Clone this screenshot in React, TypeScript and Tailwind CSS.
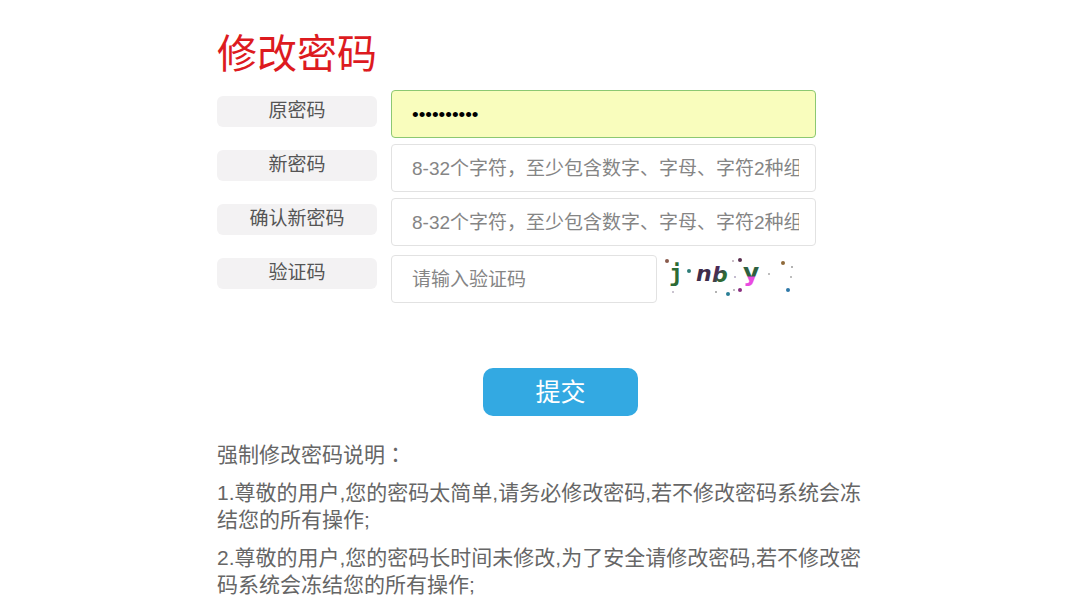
import { useState } from "react";
import type { FormEvent } from "react";

interface FieldProps {
  id: string;
  label: string;
  placeholder?: string;
  defaultValue?: string;
  filled?: boolean;
}

const PASSWORD_HINT = "8-32个字符，至少包含数字、字母、字符2种组合";

const NOTES = [
  "1.尊敬的用户,您的密码太简单,请务必修改密码,若不修改密码系统会冻结您的所有操作;",
  "2.尊敬的用户,您的密码长时间未修改,为了安全请修改密码,若不修改密码系统会冻结您的所有操作;",
];

const SPECKS = [
  { x: 2, y: 6, r: 2, color: "#8a5a4c" },
  { x: 24, y: 16, r: 2, color: "#2f7d78" },
  { x: 75, y: 5, r: 2, color: "#5a2f4f" },
  { x: 118, y: 8, r: 2, color: "#8f6a3a" },
  { x: 63, y: 39, r: 2, color: "#2a7f96" },
  { x: 75, y: 35, r: 2, color: "#8a2f80" },
  { x: 123, y: 35, r: 2, color: "#2f78a8" },
  { x: 68, y: 6, r: 1, color: "#b9a9b4" },
  { x: 70, y: 22, r: 1, color: "#b0a6c0" },
  { x: 104, y: 19, r: 1, color: "#a8a8a8" },
  { x: 127, y: 12, r: 1, color: "#9a9a9a" },
  { x: 126, y: 22, r: 1, color: "#a8a8a8" },
  { x: 8, y: 37, r: 1, color: "#b9b0c0" },
  { x: 51, y: 37, r: 1, color: "#9a9a9a" },
  { x: 69, y: 35, r: 1, color: "#a8a0a8" },
];

function Field({ id, label, placeholder, defaultValue, filled }: FieldProps) {
  return (
    <div className="flex items-start gap-[14px]">
      <FieldLabel id={id} label={label} />
      <input
        id={id}
        type="password"
        placeholder={placeholder}
        defaultValue={defaultValue}
        className={`h-12 w-[425px] min-w-0 rounded border pt-[2px] pr-4 pl-5 text-[19px] outline-none placeholder:text-[#858585] ${
          filled
            ? "border-[#8cc872] bg-[#f9fdbd] text-black"
            : "border-[#e2e2e2] bg-white text-[#555]"
        }`}
      />
    </div>
  );
}

function FieldLabel({ id, label }: { id: string; label: string }) {
  return (
    <label
      htmlFor={id}
      className="mt-[6px] h-[31px] w-40 shrink-0 rounded-md bg-[#f3f2f3] text-center text-[19px] leading-[30px] text-[#555]"
    >
      {label}
    </label>
  );
}

function Captcha() {
  return (
    <svg viewBox="0 0 130 42" className="h-[42px] w-[130px]" aria-label="验证码">
      <defs>
        <linearGradient id="captchaB" x1="0" y1="0" x2="1" y2="1">
          <stop offset="35%" stopColor="#4a2a55" />
          <stop offset="65%" stopColor="#2f6b35" />
        </linearGradient>
        <linearGradient
          id="captchaY"
          gradientUnits="userSpaceOnUse"
          x1="0"
          y1="12"
          x2="0"
          y2="32"
        >
          <stop offset="45%" stopColor="#2f6040" />
          <stop offset="50%" stopColor="#e94be0" />
        </linearGradient>
      </defs>
      <g fontFamily="'DejaVu Sans', sans-serif" fontWeight="bold">
        <text
          x="4"
          y="26"
          fontSize="23"
          fill="#2c6b35"
          fontFamily="'DejaVu Sans Mono', monospace"
        >
          j
        </text>
        <text x="31" y="26" fontSize="22" fontStyle="italic" fill="#3f2c4a">
          n
        </text>
        <text x="47" y="27" fontSize="22" fontStyle="italic" fill="url(#captchaB)">
          b
        </text>
        <text x="78" y="26" fontSize="25" fill="url(#captchaY)">
          y
        </text>
      </g>
      {SPECKS.map((s) => (
        <circle key={`${s.x}-${s.y}`} cx={s.x} cy={s.y} r={s.r} fill={s.color} />
      ))}
    </svg>
  );
}

function App() {
  const [submitted, setSubmitted] = useState(false);

  const handleSubmit = (e: FormEvent) => {
    e.preventDefault();
    setSubmitted(true);
  };

  return (
    <main className="mx-auto max-w-[664px] bg-white pt-[30px] pl-[9px] font-['Liberation_Sans','Noto_Sans_CJK_SC',sans-serif]">
      <h1 className="text-[40px] leading-[48px] text-[#dd1b1f]">修改密码</h1>
      <form onSubmit={handleSubmit} className="mt-3 flex flex-col gap-[6px]">
        <Field id="old" label="原密码" defaultValue="abcd123456" filled />
        <Field id="new" label="新密码" placeholder={PASSWORD_HINT} />
        <Field id="confirm" label="确认新密码" placeholder={PASSWORD_HINT} />
        <div className="flex items-start gap-[14px]">
          <FieldLabel id="code" label="验证码" />
          <div className="flex items-start gap-2 pt-[3px]">
            <input
              id="code"
              type="text"
              placeholder="请输入验证码"
              className="h-12 w-[266px] rounded border border-[#e2e2e2] bg-white px-5 pt-[2px] text-[19px] text-[#555] outline-none placeholder:text-[#858585]"
            />
            <Captcha />
          </div>
        </div>
        <button
          type="submit"
          disabled={submitted}
          className="mt-[59px] ml-[266px] h-12 w-[155px] rounded-[10px] bg-[#33a9e2] text-[25px] leading-[48px] text-white"
        >
          提交
        </button>
      </form>
      <section className="mt-6 flex flex-col gap-[11px] text-[21px] leading-[27px] text-[#666]">
        <p>
          强制修改密码说明
          <span className="font-['Noto_Sans_CJK_TC',sans-serif]">：</span>
        </p>
        {NOTES.map((note) => (
          <p key={note}>{note}</p>
        ))}
      </section>
    </main>
  );
}

export default App;
